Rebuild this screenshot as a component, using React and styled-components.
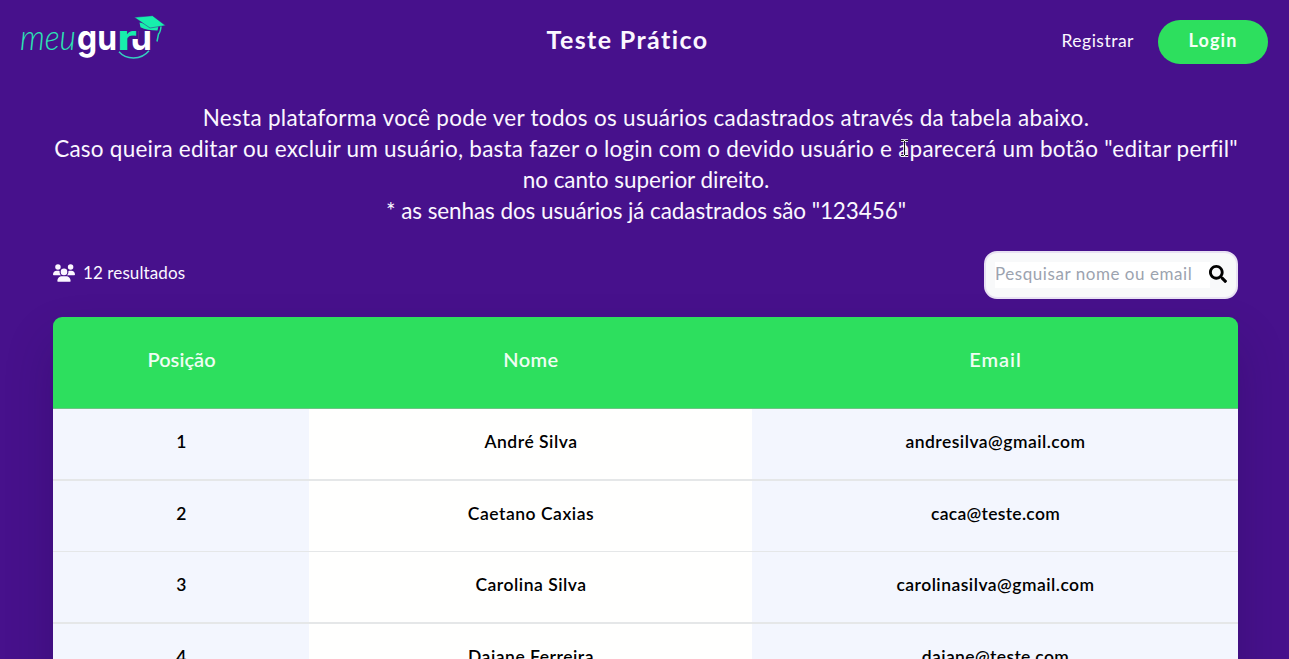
import React from "react";
import styled, { createGlobalStyle } from "styled-components";
import { FaUsers } from "react-icons/fa6";
import { FaSearch } from "react-icons/fa";

const GlobalStyle = createGlobalStyle`
  * { box-sizing: border-box; }
  body {
    margin: 0;
    background: #47118c;
    color: #fbf7ff;
    font-family: Lato, "Open Sans", sans-serif;
    font-variant-ligatures: none;
  }
`;

const Page = styled.div`
  height: 659px;
  overflow: hidden;
  position: relative;
`;

const Header = styled.header`
  display: grid;
  grid-template-columns: 1fr auto 1fr;
  align-items: center;
  height: 84px;
  padding: 0 21px 0 20px;
`;

const Logo = styled.svg`
  width: 150px;
  height: 52px;
  display: block;
  margin-top: -8px;
`;

const Thin = styled.text`
  font: italic 300 35px Lato, sans-serif;
  fill: #2be5b4;
`;

const Heavy = styled.text`
  font: 700 34px Inter, sans-serif;
  fill: ${(p) => (p.$accent ? "#17efac" : "#fff")};
`;

const Title = styled.h1`
  margin: 0 0 7px;
  padding-right: 33px;
  font-size: 25px;
  font-weight: 700;
  line-height: 30px;
  letter-spacing: 1.4px;
`;

const Actions = styled.nav`
  display: flex;
  align-items: center;
  justify-content: flex-end;
  gap: 24px;
`;

const RegisterLink = styled.a`
  font-size: 17.5px;
  letter-spacing: 0.5px;
  padding-bottom: 4px;
`;

const LoginButton = styled.button`
  width: 110px;
  height: 44px;
  padding: 0 0 4px;
  border: 0;
  border-radius: 22px;
  background: #2ddf5e;
  color: #f4fff6;
  font: 700 18px Lato, sans-serif;
  letter-spacing: 1.1px;
`;

const Intro = styled.section`
  padding: 18px 0 0 3px;
  text-align: center;
`;

const IntroLine = styled.p`
  margin: 0;
  font-size: 22.5px;
  line-height: 31px;
  white-space: nowrap;
  letter-spacing: ${(p) => p.$track}px;
`;

const Toolbar = styled.div`
  display: flex;
  justify-content: space-between;
  align-items: center;
  height: 48px;
  margin: 25px 51px 18px 53px;
`;

const Count = styled.div`
  display: flex;
  align-items: center;
  gap: 8px;
  font-size: 17px;
  letter-spacing: 0.1px;
  padding-bottom: 5px;
  svg { width: 22px; height: 18px; }
`;

const SearchBox = styled.label`
  display: flex;
  align-items: center;
  width: 254px;
  height: 48px;
  padding: 0 9px;
  border: 2px solid #e8e1f3;
  border-radius: 13px;
  background: #f8f9fa;
  color: #000;
  svg { flex: none; width: 18px; height: 18px; margin: -2px 0 0 -1px; }
`;

const SearchInput = styled.input`
  flex: 1;
  min-width: 0;
  height: 26px;
  border: 0;
  padding: 0 0 3px;
  background: #fff;
  font: 400 17px Lato, sans-serif;
  letter-spacing: 0.55px;
  &::placeholder { color: #9ca3af; opacity: 1; }
`;

const Table = styled.div`
  margin: 0 51px 0 53px;
  border-radius: 9px 9px 0 0;
  overflow: hidden;
  box-shadow: 0 25px 50px rgba(20, 0, 50, 0.2);
`;

const Row = styled.div`
  display: grid;
  grid-template-columns: 256px 443px 1fr;
  height: ${(p) => (p.$thick ? 72 : 71)}px;
  border-bottom: ${(p) => (p.$thick ? 2 : 1)}px solid #e5e7e8;
  background: #fffffe;
`;

const HeadRow = styled(Row)`
  height: 92px;
  background: #2ddf5e;
  border-bottom: 1px solid #6cc585;
`;

const Cell = styled.div`
  display: flex;
  align-items: center;
  justify-content: center;
  padding: 0 0 5px 1px;
  color: #000;
  font-size: 17.5px;
  font-weight: 600;
  letter-spacing: ${(p) => p.$track ?? 0.52}px;
  background: ${(p) => (p.$tint ? "#f3f6fe" : "transparent")};
`;

const HeadCell = styled(Cell)`
  font-size: 20px;
  color: #effdf3;
  padding-bottom: 7px;
`;

const Cursor = styled.svg`
  position: absolute;
  left: 900px;
  top: 139px;
  width: 9px;
  height: 18px;
`;

const users = [
  ["André Silva", "andresilva@gmail.com", 0.48],
  ["Caetano Caxias", "caca@teste.com", 0.3],
  ["Carolina Silva", "carolinasilva@gmail.com", 0.48],
  ["Daiane Ferreira", "daiane@teste.com", 0.37],
];

function MeuGuruLogo() {
  return (
    <Logo viewBox="20 12 150 52" role="img" aria-label="meuguru">
      <defs>
        <clipPath id="tail">
          <path d="M138 28h20v30h-26V39h6z" />
        </clipPath>
      </defs>
      <Thin x="20" y="49.5" textLength="56" lengthAdjust="spacingAndGlyphs">meu</Thin>
      <Heavy x="77" y="50" textLength="40" lengthAdjust="spacingAndGlyphs">gu</Heavy>
      <Heavy x="130.5" y="50" textLength="21.5" lengthAdjust="spacingAndGlyphs" clipPath="url(#tail)">u</Heavy>
      <Heavy $accent x="117" y="50" textLength="20" lengthAdjust="spacingAndGlyphs">r</Heavy>
      <path d="M119 51.8C126 60 141 60.500 149 50.800" fill="none" stroke="#35cfc0" strokeWidth="1.5" />
      <path d="M139.500 22.500L140.500 27.300Q147 30.500 157.500 30.500L158.500 26Z" fill="#17efac" />
      <path d="M134.300 17.300L152.500 15.700L165.500 25.600L150 28Z" fill="#17efac" stroke="#47118c" strokeWidth=".5" />
      <path d="M161 26.500Q160.500 32 158.500 34L157 41.500" fill="none" stroke="#25d9b0" strokeWidth="1.500" />
    </Logo>
  );
}

export default function App() {
  return (
    <Page>
      <GlobalStyle />
      <Header>
        <MeuGuruLogo />
        <Title>Teste Prático</Title>
        <Actions>
          <RegisterLink>Registrar</RegisterLink>
          <LoginButton>Login</LoginButton>
        </Actions>
      </Header>
      <Intro>
        <IntroLine $track={0.29}>Nesta plataforma você pode ver todos os usuários cadastrados através da tabela abaixo.</IntroLine>
        <IntroLine $track={0.23}>Caso queira editar ou excluir um usuário, basta fazer o login com o devido usuário e aparecerá um botão "editar perfil"</IntroLine>
        <IntroLine $track={-0.04}>no canto superior direito.</IntroLine>
        <IntroLine $track={-0.09}>* as senhas dos usuários já cadastrados são "123456"</IntroLine>
      </Intro>
      <Toolbar>
        <Count><FaUsers />12 resultados</Count>
        <SearchBox>
          <SearchInput placeholder="Pesquisar nome ou email" />
          <FaSearch />
        </SearchBox>
      </Toolbar>
      <Table>
        <HeadRow>
          <HeadCell $track={0.05}>Posição</HeadCell>
          <HeadCell $track={0.4}>Nome</HeadCell>
          <HeadCell $track={0.95}>Email</HeadCell>
        </HeadRow>
        {users.map(([name, email, track], i) => (
          <Row key={email} $thick={i % 2 === 0}>
            <Cell $tint>{i + 1}</Cell>
            <Cell>{name}</Cell>
            <Cell $tint $track={track}>{email}</Cell>
          </Row>
        ))}
      </Table>
      <Cursor viewBox="0 0 9 18">
        <path d="M1 1.500h2.500l1 1 1-1H8M4.500 2v14M1 16.500h2.500l1-1 1 1H8" fill="none" stroke="#fff" strokeWidth="2.600" />
        <path d="M1 1.500h2.500l1 1 1-1H8M4.500 2v14M1 16.500h2.500l1-1 1 1H8" fill="none" stroke="#111" strokeWidth="1" />
      </Cursor>
    </Page>
  );
}
